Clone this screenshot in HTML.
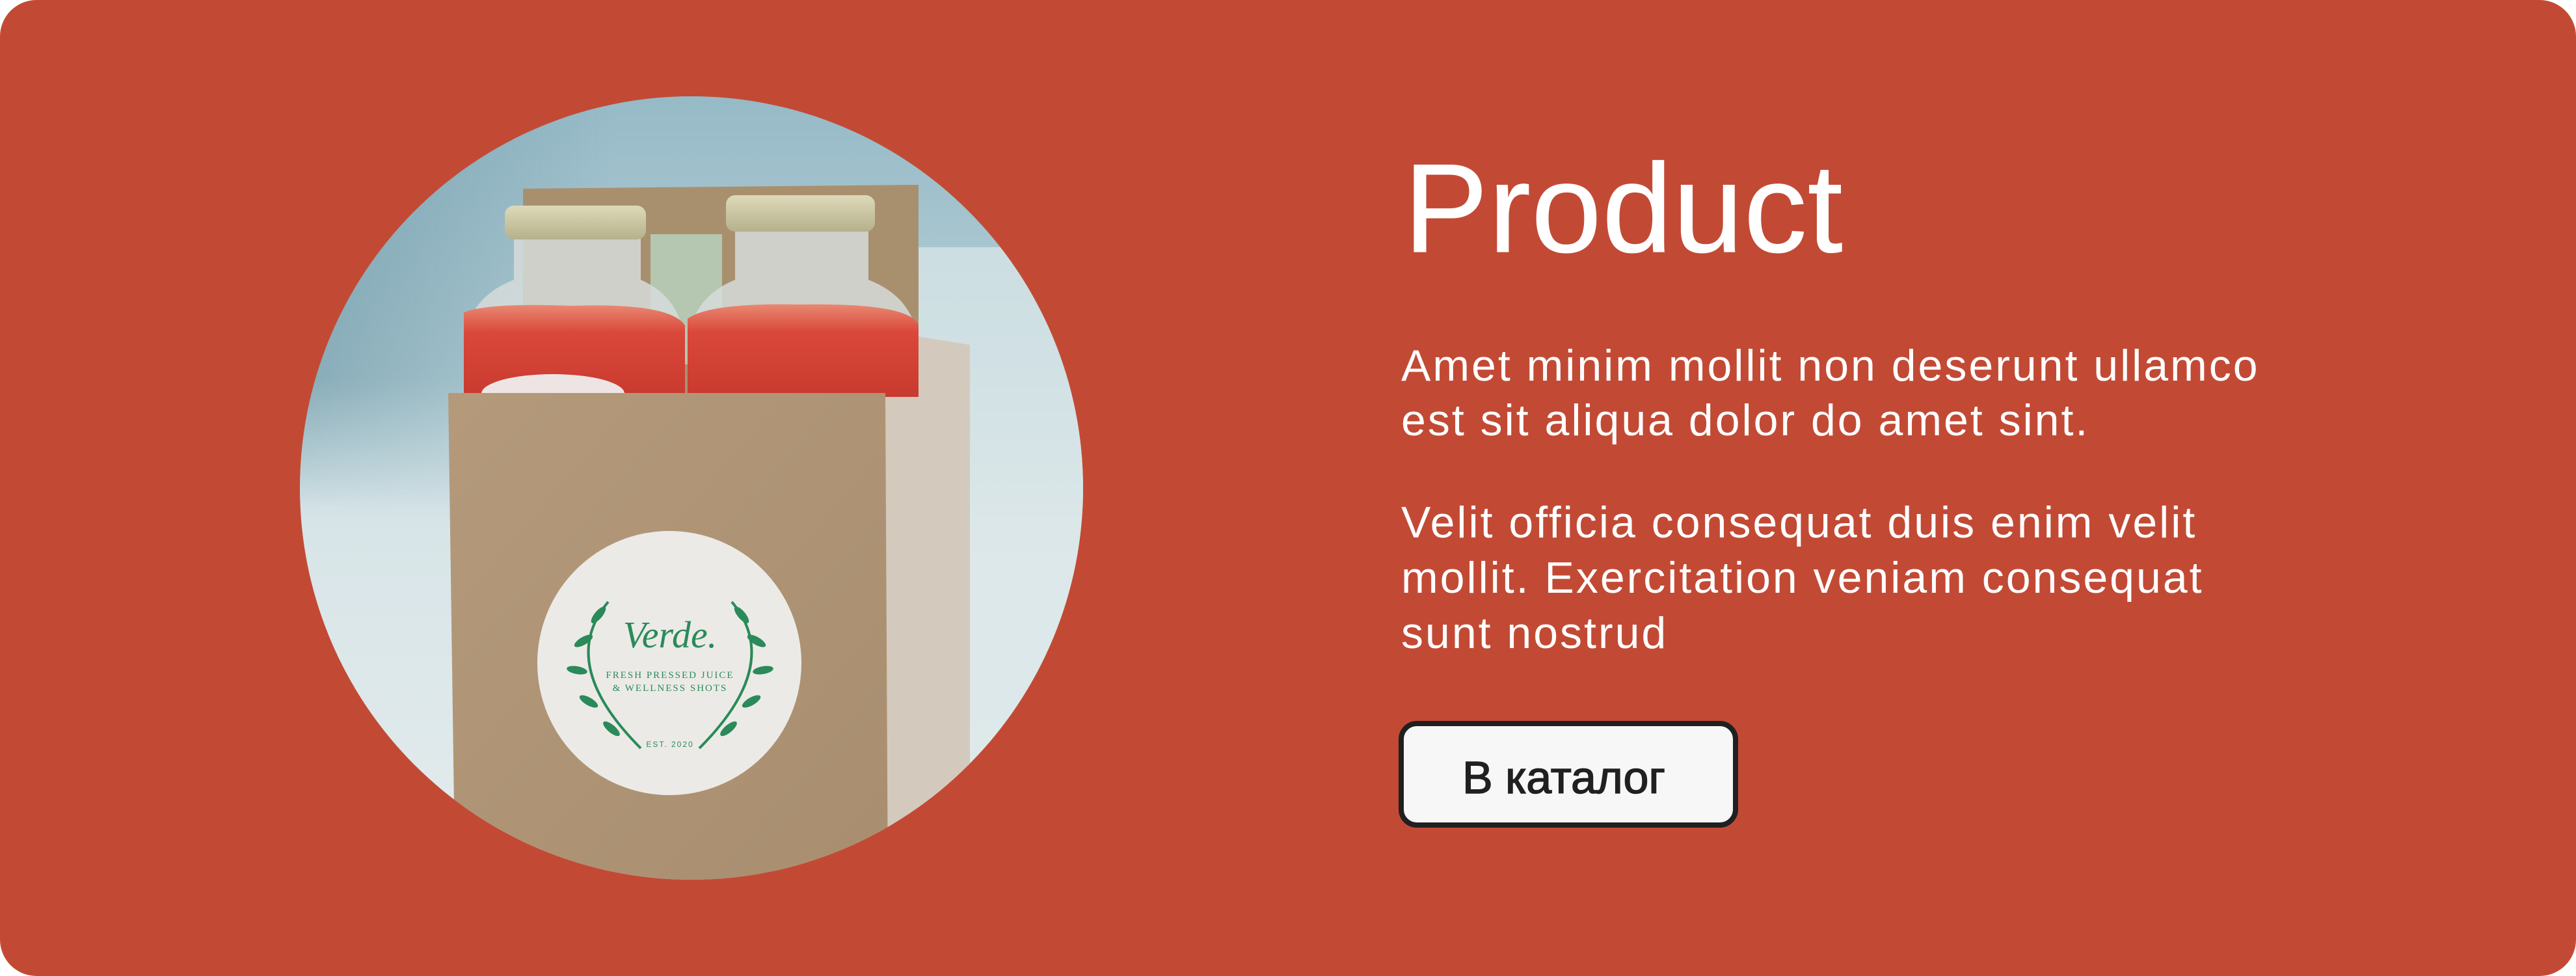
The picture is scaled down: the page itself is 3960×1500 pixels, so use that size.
<!DOCTYPE html>
<html><head><meta charset="utf-8"><style>
html,body{margin:0;padding:0;background:#fff;}
body{width:3960px;height:1500px;position:relative;overflow:hidden;font-family:"Liberation Sans",sans-serif;}
.card{position:absolute;left:0;top:0;width:3960px;height:1500px;background:#c24a35;border-radius:56px;}
h1{position:absolute;left:2158px;top:211px;margin:0;font-size:194px;font-weight:normal;color:#fff;line-height:220px;letter-spacing:1px;-webkit-text-stroke:1px #fff;}
.p{position:absolute;left:2154px;font-size:68px;color:#fff;white-space:nowrap;line-height:84px;letter-spacing:3px;}
.btn{position:absolute;left:2150px;top:1108px;width:506px;height:148px;border:8px solid #202020;border-radius:28px;background:#f7f7f7;}
.btn span{position:absolute;left:90px;top:39px;font-size:70px;line-height:80px;color:#202020;-webkit-text-stroke:1.5px #202020;white-space:nowrap;}
</style></head><body>
<div class="card"></div>
<svg style="position:absolute;left:0;top:0" width="3960" height="1500">
<defs>
<clipPath id="c"><circle cx="1063" cy="750" r="602"/></clipPath>
<linearGradient id="bg" x1="0" y1="0" x2="0" y2="1">
<stop offset="0" stop-color="#95b9c6"/><stop offset="0.35" stop-color="#b4cfd7"/><stop offset="0.55" stop-color="#d8e5e8"/><stop offset="1" stop-color="#e4eced"/></linearGradient>
<linearGradient id="lft" x1="0" y1="0" x2="1" y2="0">
<stop offset="0" stop-color="#5f8c9c" stop-opacity="0.55"/><stop offset="1" stop-color="#5f8c9c" stop-opacity="0"/></linearGradient>
<linearGradient id="lftv" x1="0" y1="0" x2="0" y2="1">
<stop offset="0" stop-color="#fff" stop-opacity="1"/><stop offset="0.7" stop-color="#fff" stop-opacity="1"/><stop offset="1" stop-color="#fff" stop-opacity="0"/></linearGradient>
<mask id="lm"><rect x="440" y="130" width="500" height="650" fill="url(#lftv)"/></mask>
<linearGradient id="kraft" x1="0" y1="0" x2="1" y2="1">
<stop offset="0" stop-color="#b49a7b"/><stop offset="1" stop-color="#a88e6f"/></linearGradient>
<linearGradient id="juice" x1="0" y1="0" x2="0" y2="1">
<stop offset="0" stop-color="#e98872"/><stop offset="0.3" stop-color="#d9483a"/><stop offset="1" stop-color="#c93a2e"/></linearGradient>
<linearGradient id="cap" x1="0" y1="0" x2="0" y2="1">
<stop offset="0" stop-color="#ded9b8"/><stop offset="1" stop-color="#b5b18c"/></linearGradient>
</defs>
<g clip-path="url(#c)">
<rect x="440" y="130" width="1250" height="1250" fill="url(#bg)"/>
<rect x="440" y="130" width="500" height="650" fill="url(#lft)" mask="url(#lm)"/>
<rect x="1412" y="380" width="300" height="1000" fill="#dde8ea" opacity="0.7"/>
<path d="M804 290 L1412 284 L1412 640 L804 640 Z" fill="#a8906f"/>
<path d="M1361 509 L1491 530 L1491 1380 L1361 1380 Z" fill="#d3cabd"/>
<rect x="1000" y="360" width="110" height="200" fill="#b8d4c0" opacity="0.8"/>
<path d="M790 367 L985 367 L985 430 Q1053 460 1053 540 L1053 610 L713 610 L713 540 Q713 460 790 430 Z" fill="#d6dcda" opacity="0.85"/>
<path d="M713 480 Q750 465 880 470 Q1030 465 1053 500 L1053 610 L713 610 Z" fill="url(#juice)"/>
<rect x="776" y="316" width="217" height="52" rx="14" fill="url(#cap)"/>
<path d="M1130 355 L1335 355 L1335 430 Q1412 460 1412 540 L1412 610 L1057 610 L1057 540 Q1057 460 1130 430 Z" fill="#d6dcda" opacity="0.85"/>
<path d="M1057 490 Q1090 465 1230 468 Q1400 465 1412 500 L1412 610 L1057 610 Z" fill="url(#juice)"/>
<rect x="1116" y="300" width="229" height="56" rx="14" fill="url(#cap)"/>
<ellipse cx="850" cy="605" rx="110" ry="30" fill="#eee4e4"/>
<path d="M689 604 L1361 604 L1365 1380 L700 1380 Z" fill="url(#kraft)"/>
<circle cx="1029" cy="1019" r="203" fill="#eceae6"/>
<text x="1030" y="995" text-anchor="middle" font-family="Liberation Serif,serif" font-style="italic" font-size="58" fill="#2a8a5a">Verde.</text>
<text x="1030" y="1042" text-anchor="middle" font-family="Liberation Serif,serif" font-size="15" fill="#2a8a5a" letter-spacing="2">FRESH PRESSED JUICE</text>
<text x="1030" y="1062" text-anchor="middle" font-family="Liberation Serif,serif" font-size="15" fill="#2a8a5a" letter-spacing="2">&amp; WELLNESS SHOTS</text>
<text x="1030" y="1148" text-anchor="middle" font-family="Liberation Sans,sans-serif" font-size="12" fill="#2a8a5a" letter-spacing="2">EST. 2020</text>
<path d="M935 925 Q855 1020 985 1150" stroke="#2a8a5a" stroke-width="4" fill="none"/>
<path d="M1125 925 Q1205 1020 1075 1150" stroke="#2a8a5a" stroke-width="4" fill="none"/>
<g fill="#2a8a5a">
<ellipse cx="920" cy="945" rx="16" ry="6" transform="rotate(-50 920 945)"/>
<ellipse cx="897" cy="985" rx="16" ry="6" transform="rotate(-30 897 985)"/>
<ellipse cx="887" cy="1030" rx="16" ry="6" transform="rotate(10 887 1030)"/>
<ellipse cx="905" cy="1078" rx="16" ry="6" transform="rotate(30 905 1078)"/>
<ellipse cx="940" cy="1120" rx="16" ry="6" transform="rotate(40 940 1120)"/>
<ellipse cx="1140" cy="945" rx="16" ry="6" transform="rotate(50 1140 945)"/>
<ellipse cx="1163" cy="985" rx="16" ry="6" transform="rotate(30 1163 985)"/>
<ellipse cx="1173" cy="1030" rx="16" ry="6" transform="rotate(-10 1173 1030)"/>
<ellipse cx="1155" cy="1078" rx="16" ry="6" transform="rotate(-30 1155 1078)"/>
<ellipse cx="1120" cy="1120" rx="16" ry="6" transform="rotate(-40 1120 1120)"/>
</g>
</g>
</svg>
<h1>Product</h1>
<div class="p" style="top:520px">Amet minim mollit non deserunt ullamco<br>est sit aliqua dolor do amet sint.</div>
<div class="p" style="top:761px;line-height:85px">Velit officia consequat duis enim velit<br>mollit. Exercitation veniam consequat<br>sunt nostrud</div>
<div class="btn"><span>В каталог</span></div>
</body></html>
